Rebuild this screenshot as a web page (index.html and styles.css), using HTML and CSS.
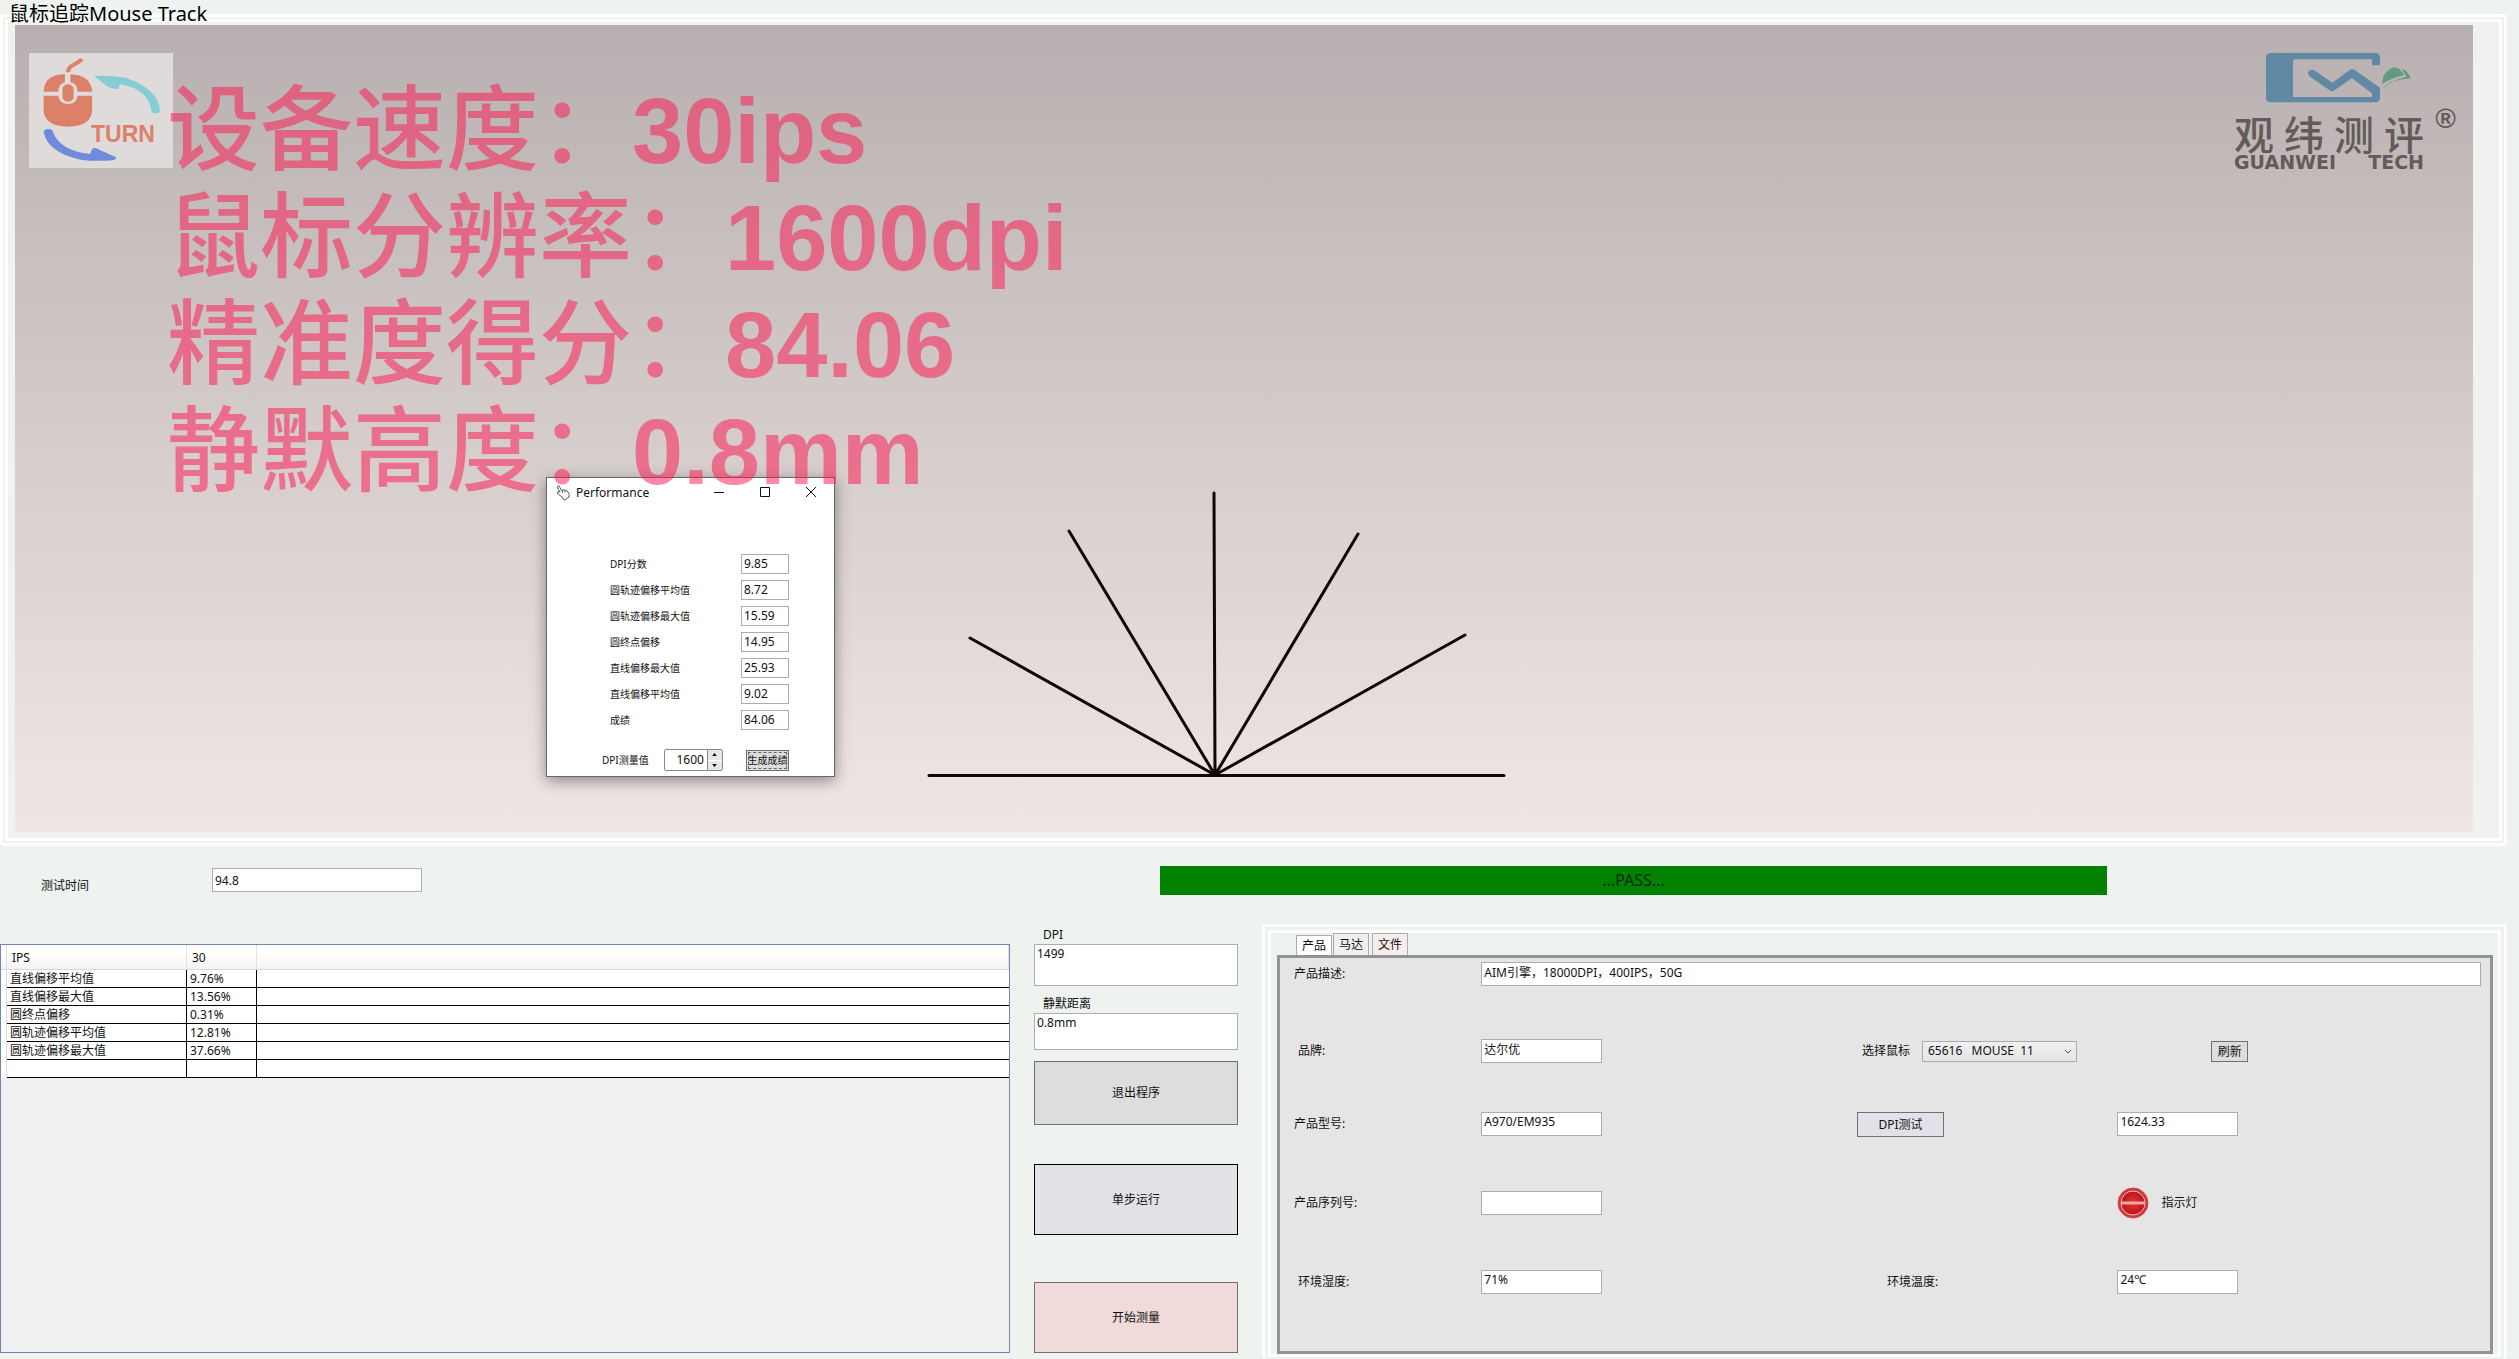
FILE: index.html
```html
<!DOCTYPE html>
<html lang="zh-CN">
<head>
<meta charset="utf-8">
<title>鼠标追踪Mouse Track</title>
<link rel="stylesheet" href="styles.css">
</head>
<body>
<main class="app">
  <section class="track frame">
    <h1 class="track-title">鼠标追踪Mouse Track</h1>
    <div class="frame-inner track-inner">
      <div class="stage">
        <svg class="badge" viewBox="0 0 144 115" role="img" aria-label="TURN">
          <rect width="144" height="115" fill="#dfdbda"/>
          <g transform="scale(.3945 .3333) translate(-73 -158)">
            <path d="M172 216 Q172 200 188 192 Q202 184 207 176" fill="none" stroke="#dc8068" stroke-width="11"/>
            <path d="M110 274 Q112 222 164 222 V246 Q148 250 147 274 Z M178 222 Q230 224 233 274 H196 Q196 250 178 246 Z" fill="#dc8068"/>
            <path d="M110 286 H147 Q150 310 172 311 Q194 310 196 286 H233 V330 Q231 378 172 379 Q112 378 110 330 Z" fill="#dc8068"/>
            <rect x="158" y="252" width="28" height="52" rx="14" fill="#dc8068"/>
            <path d="M238 227 Q275 224 318 232 Q402 266 405 332 Q403 339 394 339 L384 337 Q378 266 304 252 L299 266 Q284 268 270 257 Z" fill="#83ced4"/>
            <path d="M110 396 Q112 384 124 386 Q134 388 134 396 Q152 452 228 461 L233 445 Q244 440 252 449 L293 470 Q296 478 284 480 Q240 484 204 478 Q122 458 110 396 Z" fill="#6f8bdc"/>
          </g>
          <text x="62" y="89" class="badge-text">TURN</text>
        </svg>
        <div class="headline">
          <p>设备速度：<b>30ips</b></p>
          <p>鼠标分辨率：<b>1600dpi</b></p>
          <p>精准度得分：<b>84.06</b></p>
          <p>静默高度：<b>0.8mm</b></p>
        </div>
        <div class="brand">
          <svg class="brand-mark" viewBox="0 0 146 50" aria-hidden="true">
            <g transform="scale(.3333) translate(-261 -158)">
              <path fill-rule="evenodd" d="M275 158 H592 Q603 160 603 172 V195 H579 V177 H347 Q342 178 342 184 V290 H579 V279 L519 234 L464 271 Q459 275 454 271 L391 228 Q384 218 390 211 Q398 206 408 211 L460 247 L512 209 Q519 204 527 209 L603 262 V292 Q602 305 590 306 H275 Q262 305 261 292 V172 Q262 160 275 158 Z" fill="#6188a5"/>
              <path d="M610 250 Q609 214 646 200 L661 205 L676 224 Q636 234 610 250 Z M668 206 Q678 207 685 216 L696 234 Q640 236 612 264 Q622 246 682 229 Z" fill="#629a82"/>
            </g>
          </svg>
          <p class="brand-cn"><span>观</span><span>纬</span><span>测</span><span>评</span></p>
          <p class="brand-en"><span>GUANWEI</span><span>TECH</span></p>
          <span class="brand-reg">®</span>
        </div>
        <svg class="plot" viewBox="0 0 590 290" aria-hidden="true">
          <path class="plot-base" d="M9 285.500H584"/>
          <path d="M50 148L295 285M149 41L295 285M294 3L295 285M438 44L295 285M545 145L295 285"/>
        </svg>
        <form class="window">
          <div class="window-bar">
            <svg class="window-icon" viewBox="0 0 14 16" aria-hidden="true"><path d="M1 1 L3 1 L6 6 Q7 4 9 5 L12 7 Q14 9 13 12 L9 15 Q7 15 6 12 L1 8 Q1 6 4 7 L1 2 M6 6 L7 8 M9 5 L9 7" fill="#fff" stroke="#555" stroke-width="1"/></svg>
            <h2 class="window-title">Performance</h2>
            <button type="button" class="window-btn" aria-label="最小化"><svg viewBox="0 0 10 10"><path d="M0 5.500H10"/></svg></button>
            <button type="button" class="window-btn" aria-label="最大化"><svg viewBox="0 0 10 10"><path d="M.5 .5H9.500V9.500H.5Z"/></svg></button>
            <button type="button" class="window-btn" aria-label="关闭"><svg viewBox="0 0 10 10"><path d="M0 0L10 10M10 0L0 10"/></svg></button>
          </div>
          <div class="scores">
            <label for="s1">DPI分数</label><input id="s1" class="field" value="9.85">
            <label for="s2">圆轨迹偏移平均值</label><input id="s2" class="field" value="8.72">
            <label for="s3">圆轨迹偏移最大值</label><input id="s3" class="field" value="15.59">
            <label for="s4">圆终点偏移</label><input id="s4" class="field" value="14.95">
            <label for="s5">直线偏移最大值</label><input id="s5" class="field" value="25.93">
            <label for="s6">直线偏移平均值</label><input id="s6" class="field" value="9.02">
            <label for="s7">成绩</label><input id="s7" class="field" value="84.06">
          </div>
          <div class="window-foot">
            <label for="dpi-measured">DPI测量值</label>
            <div class="spinner">
              <input id="dpi-measured" inputmode="numeric" value="1600">
              <div class="spinner-arrows">
                <button type="button" aria-label="增加"><svg viewBox="0 0 6 4"><path d="M0 4L3 0L6 4Z"/></svg></button>
                <button type="button" aria-label="减少"><svg viewBox="0 0 6 4"><path d="M0 0L3 4L6 0Z"/></svg></button>
              </div>
            </div>
            <button type="button" class="score-btn">生成成绩</button>
          </div>
        </form>
      </div>
    </div>
  </section>

  <section class="status">
    <label for="time">测试时间</label>
    <div><input id="time" class="field time-field" value="94.8"></div>
    <output class="result">...PASS...</output>
  </section>

  <section class="lower">
    <div class="grid-view">
      <table>
        <colgroup><col class="col-head"><col class="col-name"><col class="col-value"><col></colgroup>
        <thead><tr><th></th><th>IPS</th><th>30</th><th></th></tr></thead>
        <tbody>
          <tr><th></th><td>直线偏移平均值</td><td>9.76%</td><td></td></tr>
          <tr><th></th><td>直线偏移最大值</td><td>13.56%</td><td></td></tr>
          <tr><th></th><td>圆终点偏移</td><td>0.31%</td><td></td></tr>
          <tr><th></th><td>圆轨迹偏移平均值</td><td>12.81%</td><td></td></tr>
          <tr><th></th><td>圆轨迹偏移最大值</td><td>37.66%</td><td></td></tr>
          <tr><th></th><td></td><td></td><td></td></tr>
        </tbody>
      </table>
    </div>

    <div class="controls">
      <label for="dpi">DPI</label>
      <textarea id="dpi" class="field dpi-field">1499</textarea>
      <label for="lod">静默距离</label>
      <textarea id="lod" class="field lod-field">0.8mm</textarea>
      <button type="button" class="action exit">退出程序</button>
      <button type="button" class="action step">单步运行</button>
      <button type="button" class="action start">开始测量</button>
    </div>

    <div class="frame product">
      <div class="frame-inner product-inner">
        <div class="tabs" role="tablist">
          <button type="button" role="tab" aria-selected="true" class="tab active">产品</button>
          <button type="button" role="tab" aria-selected="false" class="tab">马达</button>
          <button type="button" role="tab" aria-selected="false" class="tab rose">文件</button>
        </div>
        <form class="sheet">
          <label for="desc" class="lead">产品描述:</label>
          <input id="desc" class="field wide" value="AIM引擎，18000DPI，400IPS，50G">

          <label for="brand" class="lead inset">品牌:</label>
          <input id="brand" class="field" value="达尔优">
          <div class="pick">
            <label for="mouse">选择鼠标</label>
            <span class="select"><select id="mouse"><option>65616&nbsp;&nbsp; MOUSE&nbsp; 11</option></select><svg viewBox="0 0 6 4" aria-hidden="true"><path d="M0 0L3 3L6 0"/></svg></span>
          </div>
          <button type="button" class="small-btn refresh">刷新</button>

          <label for="model" class="lead">产品型号:</label>
          <input id="model" class="field" value="A970/EM935">
          <button type="button" class="small-btn dpi-test">DPI测试</button>
          <input class="field" aria-label="DPI测试" value="1624.33">

          <label for="serial" class="lead">产品序列号:</label>
          <input id="serial" class="field" value="">
          <div class="lamp">
            <svg viewBox="0 0 32 32" aria-hidden="true">
              <defs><radialGradient id="lamp-red"><stop offset="0" stop-color="#f0303a"/><stop offset="1" stop-color="#b01820"/></radialGradient></defs>
              <circle cx="16" cy="16" r="15" fill="#dc3040" stroke="#c05058" stroke-width="1"/>
              <circle cx="16" cy="16" r="12" fill="url(#lamp-red)" stroke="#f4c8a8" stroke-width="1"/>
              <path d="M4 16H28" stroke="#f0a8a0" stroke-width="3"/>
            </svg>
            <span>指示灯</span>
          </div>

          <label for="humidity" class="lead inset">环境湿度:</label>
          <input id="humidity" class="field" value="71%">
          <label for="temp" class="temp-label">环境温度:</label>
          <input id="temp" class="field" value="24℃">
        </form>
      </div>
    </div>
  </section>
</main>
</body>
</html>
```
FILE: styles.css
```css
* { box-sizing: border-box; }

body {
  margin: 0;
  background: #eef3ef;
  color: #111;
  font: 12px/16px "Noto Sans", "Noto Sans CJK SC", sans-serif;
}

h1, h2, p { margin: 0; }
h1, h2 { font-weight: 400; }

button, input, select, textarea {
  font: inherit;
  color: inherit;
  margin: 0;
  border-radius: 0;
}

.app {
  display: flex;
  flex-direction: column;
  min-height: 100vh;
  padding-top: 14px;
}

/* double white outline */
.frame {
  border: 3px solid #fff;
  border-radius: 4px;
  padding: 2px;
}

.frame-inner {
  border: 3px solid #fff;
  border-radius: 2px;
}

.field {
  display: block;
  width: 100%;
  height: 24px;
  padding: 0 2px 5px;
  border: 1px solid #abadb3;
  background: #fff;
  line-height: 16px;
  resize: none;
}

/* tracking stage */
.track {
  position: relative;
  margin-right: 12px;
  background: #f1f2ef;
}

.track-title {
  position: absolute;
  left: 6px;
  top: -15px;
  font-size: 20px;
  line-height: 24px;
  color: #000;
}

.track-inner { padding: 3px 26px 6px 7px; }

.stage {
  position: relative;
  display: flex;
  align-items: flex-start;
  min-height: 807px;
  padding: 28px 15px 0 14px;
  background: linear-gradient(#b8b0b0, #f0e6e5);
}

.badge { width: 144px; height: 115px; }

.badge-text {
  font: bold 23px "Liberation Sans", sans-serif;
  fill: #dc8068;
}

.headline {
  position: relative;
  z-index: 2;
  margin: 25px auto 0 -6px;
  font: 500 93px/107px "Liberation Sans", "Noto Sans CJK SC", sans-serif;
  color: rgba(255, 18, 76, .5);
  pointer-events: none;
}

.headline p { height: 107px; }
.headline b { font-size: 92px; }

.brand {
  position: relative;
  width: 224px;
  color: #635b5a;
}

.brand-mark { display: block; width: 146px; height: 50px; margin-left: 32px; }

.brand-cn, .brand-en {
  display: flex;
  justify-content: space-between;
  width: 190px;
}

.brand-cn {
  margin-top: 10px;
  font: 500 40px/40px "Noto Sans CJK SC", sans-serif;
}

.brand-en { font: bold 19px/18px "DejaVu Sans", sans-serif; }

.brand-reg {
  position: absolute;
  right: 2px;
  top: 52px;
  font: bold 28px/28px "Liberation Sans", sans-serif;
}

.plot {
  position: absolute;
  left: 905px;
  top: 465px;
  width: 590px;
  height: 290px;
}

.plot path { fill: none; stroke: #0c0808; stroke-width: 3; stroke-linecap: round; }

/* performance window */
.window {
  position: absolute;
  left: 531px;
  top: 452px;
  width: 289px;
  height: 300px;
  border: 1px solid #666;
  background: #fff;
  box-shadow: 0 4px 14px rgba(0, 0, 0, .4);
}

.window-bar {
  display: flex;
  align-items: center;
  height: 30px;
  padding-left: 9px;
}

.window-icon { width: 14px; height: 16px; }
.window-title { flex: 1; margin-left: 6px; font-size: 12px; }

.window-btn {
  width: 46px;
  height: 30px;
  padding: 0;
  border: 0;
  background: none;
}

.window-btn svg { width: 10px; height: 10px; }
.window-btn path { fill: none; stroke: #111; }

.scores {
  display: grid;
  grid-template-columns: 131px 48px;
  grid-auto-rows: 20px;
  row-gap: 6px;
  align-items: center;
  padding: 46px 0 0 63px;
}

.scores label, .window-foot { font-size: 10px; }
.scores .field { height: 20px; padding: 0 2px 2px; }

.window-foot {
  display: flex;
  align-items: center;
  justify-content: space-between;
  margin-top: 19px;
  padding: 0 45px 0 55px;
}

.spinner {
  display: flex;
  width: 59px;
  height: 22px;
  margin-right: 8px;
  border: 1px solid #888;
  border-radius: 2px;
}

.spinner input {
  width: 43px;
  padding: 0 3px;
  border: 0;
  border-right: 1px solid #888;
  background: none;
  font-size: 12px;
  text-align: right;
}

.spinner-arrows { flex: 1; display: flex; flex-direction: column; gap: 1px; }

.spinner-arrows button {
  flex: 1;
  display: grid;
  place-items: center;
  padding: 0;
  border: 0;
  background: #e6e6e6;
}

.spinner-arrows svg { width: 5px; height: 3px; }

.score-btn {
  width: 43px;
  height: 21px;
  padding: 0;
  border: 1px solid #707070;
  outline: 1px dashed #666;
  outline-offset: -3px;
  background: #ddd;
  font-size: 10px;
  white-space: nowrap;
}

/* test time and result */
.status {
  display: grid;
  grid-template-columns: 171fr 948fr 947fr 400fr;
  align-items: center;
  height: 78px;
  margin-right: 12px;
  padding-left: 41px;
}

.status label { padding-top: 2px; }
.time-field { width: 210px; padding-bottom: 0; margin-bottom: 10px; }

.result {
  height: 29px;
  margin-bottom: 10px;
  background: #008200;
  color: #0c280c;
  font-size: 16px;
  line-height: 29px;
  text-align: center;
}

/* lower area */
.lower {
  flex: 1;
  display: grid;
  grid-template-columns: 1010fr 204fr 1245fr;
  gap: 24px;
  margin-right: 12px;
}

.grid-view {
  margin: 20px 0 6px;
  border: 1px solid #7088ac;
  background: #f0f0f0;
}

table {
  width: 100%;
  table-layout: fixed;
  border-collapse: separate;
  border-spacing: 0;
}

.col-head { width: 6px; }
.col-name { width: 180px; }
.col-value { width: 70px; }

th { padding: 0 5px; font-weight: 400; text-align: left; }

thead th {
  height: 25px;
  padding-top: 2px;
  border-right: 1px solid #e0e3e6;
  border-bottom: 1px solid #d5d8dc;
  background: linear-gradient(#fff 40%, #f1f3f5);
}

tbody th { padding: 0; background: #fff; border-right: 1px solid #ddd; }

td {
  height: 18px;
  padding: 0 3px;
  border-right: 1px solid #000;
  border-bottom: 1px solid #000;
  background: #fff;
  line-height: 16px;
}

td:last-child { border-right: 0; }

.controls { display: flex; flex-direction: column; padding: 2px 0 6px; }
.controls label { padding-left: 9px; line-height: 18px; }
.controls .field { padding-top: 1px; }
.dpi-field { height: 42px; margin-bottom: 9px; }
.lod-field { height: 37px; }

.action {
  height: 71px;
  border: 1px solid #707070;
}

.exit { height: 64px; margin-top: 11px; background: #ddd; }
.step { margin-top: 39px; border-color: #000; background: #e3e1e8; }
.start { margin-top: auto; background: #f0dada; }

.product { display: flex; border-bottom: 0; padding: 3px 3px 2px 3px; }

.product-inner {
  flex: 1;
  display: flex;
  flex-direction: column;
  padding: 0 5px 0 6px;
}

.tabs { display: flex; align-items: flex-end; height: 22px; padding-left: 19px; }

.tab {
  width: 36px;
  height: 22px;
  padding: 0;
  margin-right: 3px;
  border: 1px solid #acacac;
  border-bottom: 0;
  background: #f0eef0;
}

.tab.active { height: 20px; margin-right: 1px; background: #fff; }
.tab.rose { background: #f8ecec; }

.sheet {
  flex: 1;
  display: grid;
  grid-template-columns: 187fr 120fr 255fr 260fr 120fr 243fr;
  grid-template-rows: 77px 73px 79px 79px 24px;
  align-items: start;
  align-content: start;
  padding: 4px 9px 0 14px;
  border: 3px solid #929394;
  background: #e5e5e5;
}

.sheet > label { padding-top: 4px; }
.sheet .lead { grid-column: 1; }
.sheet .inset { padding-left: 4px; }
.sheet .wide { grid-column: 2 / -1; }
.pick, .dpi-test, .temp-label { grid-column: 4; }

.pick { display: flex; align-items: center; height: 24px; padding-left: 5px; }
.pick label { flex: 0 0 60px; }

.select { position: relative; flex: 0 0 155px; }

.select select {
  display: block;
  appearance: none;
  width: 100%;
  height: 21px;
  padding: 0 5px;
  border: 1px solid #acacac;
  background: linear-gradient(#f0f0f0, #e5e5e5);
}

.select svg { position: absolute; right: 6px; top: 9px; width: 6px; height: 4px; }
.select path { fill: none; stroke: #555; }

.small-btn { height: 25px; padding: 0; border: 1px solid #707070; background: #ddd; }
.refresh { grid-column: 5 / -1; width: 37px; height: 21px; margin: 2px 0 0 94px; }
.dpi-test { width: 87px; background: #e3e1e8; }

.lamp { grid-column: 5 / -1; display: flex; align-items: center; gap: 12px; height: 24px; }
.lamp svg { width: 32px; height: 32px; }

.temp-label { padding-left: 30px; }
```
